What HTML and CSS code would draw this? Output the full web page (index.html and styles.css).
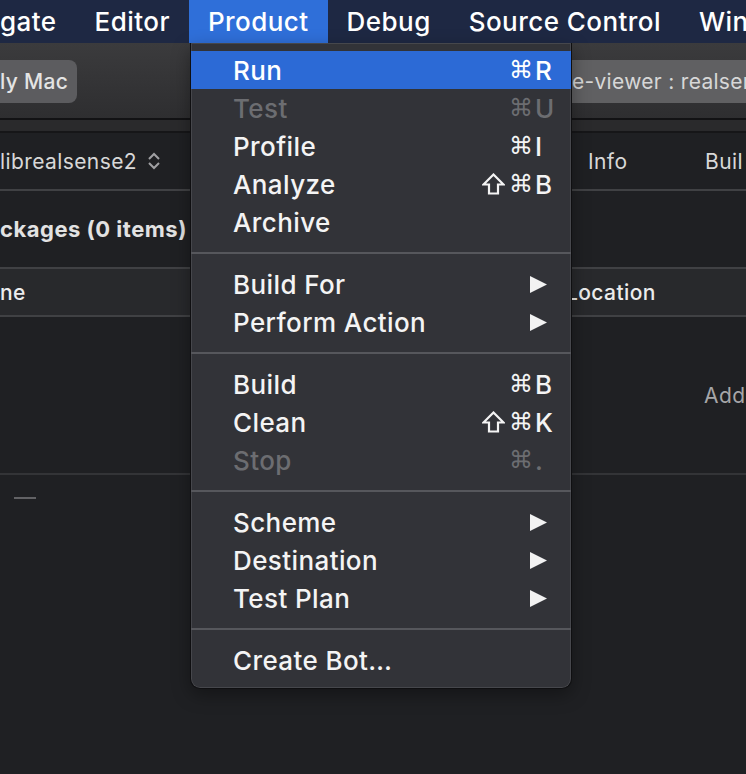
FILE: index.html
```html
<!DOCTYPE html>
<html>
<head>
<meta charset="utf-8">
<link rel="stylesheet" href="styles.css">
</head>
<body>
<div class="screen">
  <div class="menubar">
    <span class="mb-item first">gate</span>
    <span class="mb-item">Editor</span>
    <span class="mb-item active">Product</span>
    <span class="mb-item">Debug</span>
    <span class="mb-item">Source Control</span>
    <span class="mb-item">Win</span>
  </div>

  <div class="toolbar">
    <div class="scheme-btn">ly Mac</div>
    <div class="activity">e-viewer : realsen</div>
  </div>
  <div class="tabstrip"></div>

  <div class="row target-row">
    <div class="target">librealsense2
      <svg class="chev" width="14" height="20" viewBox="0 0 14 20"><polyline points="2,8 7,3 12,8" /><polyline points="2,12 7,17 12,12" /></svg>
    </div>
    <div class="tab">Info</div>
    <div class="tab">Buil</div>
  </div>

  <div class="row pkg-row">ckages (0 items)</div>

  <div class="row header-row">
    <div>ne</div>
    <div>Location</div>
  </div>

  <div class="row empty-row">
    <div></div>
    <div class="add">Add</div>
  </div>

  <div class="bottom-row"><span class="dash"></span></div>

  <div class="menu">
    <div class="mi hl"><span class="lbl">Run</span><span class="sc"><span class="mod">⌘</span><span class="key">R</span></span></div>
    <div class="mi dis"><span class="lbl">Test</span><span class="sc"><span class="mod">⌘</span><span class="key">U</span></span></div>
    <div class="mi"><span class="lbl">Profile</span><span class="sc"><span class="mod">⌘</span><span class="key">I</span></span></div>
    <div class="mi"><span class="lbl">Analyze</span><span class="sc"><span class="mod"><svg class="shift" width="23" height="22" viewBox="0 0 23 22"><path d="M11.5 1.5 L21.5 11.5 L16 11.5 L16 20.5 L7 20.5 L7 11.5 L1.5 11.5 Z"/></svg>⌘</span><span class="key">B</span></span></div>
    <div class="mi"><span class="lbl">Archive</span></div>
    <div class="sep"></div>
    <div class="mi"><span class="lbl">Build For</span><svg class="arrow" width="17" height="17" viewBox="0 0 17 17"><polygon points="0,0 17,8.5 0,17"/></svg></div>
    <div class="mi"><span class="lbl">Perform Action</span><svg class="arrow" width="17" height="17" viewBox="0 0 17 17"><polygon points="0,0 17,8.5 0,17"/></svg></div>
    <div class="sep"></div>
    <div class="mi"><span class="lbl">Build</span><span class="sc"><span class="mod">⌘</span><span class="key">B</span></span></div>
    <div class="mi"><span class="lbl">Clean</span><span class="sc"><span class="mod"><svg class="shift" width="23" height="22" viewBox="0 0 23 22"><path d="M11.5 1.5 L21.5 11.5 L16 11.5 L16 20.5 L7 20.5 L7 11.5 L1.5 11.5 Z"/></svg>⌘</span><span class="key">K</span></span></div>
    <div class="mi dis"><span class="lbl">Stop</span><span class="sc"><span class="mod">⌘</span><span class="key">.</span></span></div>
    <div class="sep"></div>
    <div class="mi"><span class="lbl">Scheme</span><svg class="arrow" width="17" height="17" viewBox="0 0 17 17"><polygon points="0,0 17,8.5 0,17"/></svg></div>
    <div class="mi"><span class="lbl">Destination</span><svg class="arrow" width="17" height="17" viewBox="0 0 17 17"><polygon points="0,0 17,8.5 0,17"/></svg></div>
    <div class="mi"><span class="lbl">Test Plan</span><svg class="arrow" width="17" height="17" viewBox="0 0 17 17"><polygon points="0,0 17,8.5 0,17"/></svg></div>
    <div class="sep"></div>
    <div class="mi"><span class="lbl">Create Bot…</span></div>
  </div>
</div>
</body>
</html>
```

FILE: styles.css
```css
* { box-sizing: border-box; }
html, body {
  margin: 0;
  padding: 0;
  background: #1f2023;
}
body {
  width: 746px;
  height: 774px;
  overflow: hidden;
  font-family: Inter, "Noto Sans", "DejaVu Sans", sans-serif;
  color: #ececec;
}
.screen {
  position: relative;
  width: 746px;
  height: 774px;
  overflow: hidden;
  background: #1f2023;
}

/* menu bar */
.menubar {
  height: 43px;
  background: #1e2843;
  display: flex;
  align-items: stretch;
  white-space: nowrap;
  font-size: 26px;
  letter-spacing: 0.45px;
  font-weight: 500;
  color: #fff;
}
.mb-item {
  display: flex;
  align-items: center;
  padding: 0 19px;
  padding-bottom: 1px;
}
.mb-item.first { padding-left: 0; }
.mb-item.active { background: #2f6fd9; }

/* toolbar */
.toolbar {
  height: 77px;
  background: linear-gradient(#3b3b3d, #2e2e30);
  border-bottom: 2px solid #121214;
  display: flex;
  align-items: flex-start;
  padding-top: 17px;
  font-size: 21px;
  letter-spacing: 0.3px;
  white-space: nowrap;
  overflow: hidden;
}
.scheme-btn {
  flex: none;
  width: 77px;
  height: 43px;
  background: #5c5c5f;
  border-radius: 0 8px 8px 0;
  color: #e4e4e4;
  display: flex;
  align-items: center;
  padding-left: 0;
  font-weight: 500;
}
.activity {
  margin-left: 483px;
  flex: none;
  width: 200px;
  height: 43px;
  background: #606062;
  color: #d7d7d7;
  display: flex;
  align-items: center;
  padding-left: 12px;
  overflow: hidden;
}
.tabstrip {
  height: 13px;
  background: #2a2a2c;
  border-bottom: 2px solid #161618;
}

/* rows */
.row {
  font-size: 21px;
  letter-spacing: 0.4px;
  white-space: nowrap;
  border-bottom: 2px solid #404144;
}
.target-row {
  height: 58px;
  display: grid;
  grid-template-columns: 588px 117px 1fr;
  align-items: center;
  color: #d8d8d8;
}
.target { display: flex; align-items: center; gap: 10px; }
.chev { fill: none; stroke: #a0a0a3; stroke-width: 2; }
.tab { color: #d8d8d8; }

.pkg-row {
  height: 78px;
  display: flex;
  align-items: center;
  font-weight: 700;
  font-size: 22px;
  letter-spacing: 0.5px;
  color: #e2e2e2;
}
.header-row {
  height: 48px;
  background: #28292c;
  display: grid;
  grid-template-columns: 566px 1fr;
  align-items: center;
  color: #ececec;
  font-weight: 500;
}
.empty-row {
  height: 158px;
  display: grid;
  grid-template-columns: 704px 1fr;
  align-items: center;
  border-bottom-color: #333437;
}
.add { color: #a6a6a8; }
.bottom-row {
  height: 60px;
  padding: 22px 0 0 14px;
}
.dash {
  display: block;
  width: 22px;
  height: 2px;
  background: #626265;
}

/* dropdown menu */
.menu {
  position: absolute;
  left: 190px;
  top: 43px;
  width: 382px;
  padding: 8px 0 9px;
  background: #323338;
  border: 1px solid #0f0f11;
  border-top: none;
  border-radius: 0 0 10px 10px;
  box-shadow: inset 0 0 0 1px rgba(255,255,255,0.10), 0 6px 18px rgba(0,0,0,0.35);
  font-size: 26px;
  letter-spacing: 0.4px;
  font-weight: 500;
  color: #f4f4f4;
  white-space: nowrap;
}
.mi {
  height: 38px;
  display: flex;
  align-items: center;
  padding: 0 18px 0 42px;
}
.mi.hl { background: #2c6ad6; color: #fff; }
.mi.dis { color: #6c6d71; }
.lbl { flex: 1; }
.sc {
  display: flex;
  align-items: center;
}
.mod {
  width: 80px;
  display: flex;
  justify-content: flex-end;
  align-items: center;
  gap: 4px;
  font-family: "DejaVu Sans", sans-serif;
  font-size: 24px;
  font-weight: 400;
  letter-spacing: 0;
}
.shift {
  fill: none;
  stroke: currentColor;
  stroke-width: 2.2;
  stroke-linejoin: miter;
}
.key {
  width: 20px;
  padding-left: 2px;
}
.arrow {
  fill: #f2f2f2;
  margin-right: 6px;
}
.sep {
  height: 24px;
  display: flex;
  align-items: center;
}
.sep::before {
  content: "";
  display: block;
  width: 100%;
  height: 2px;
  background: #56575c;
}
```
